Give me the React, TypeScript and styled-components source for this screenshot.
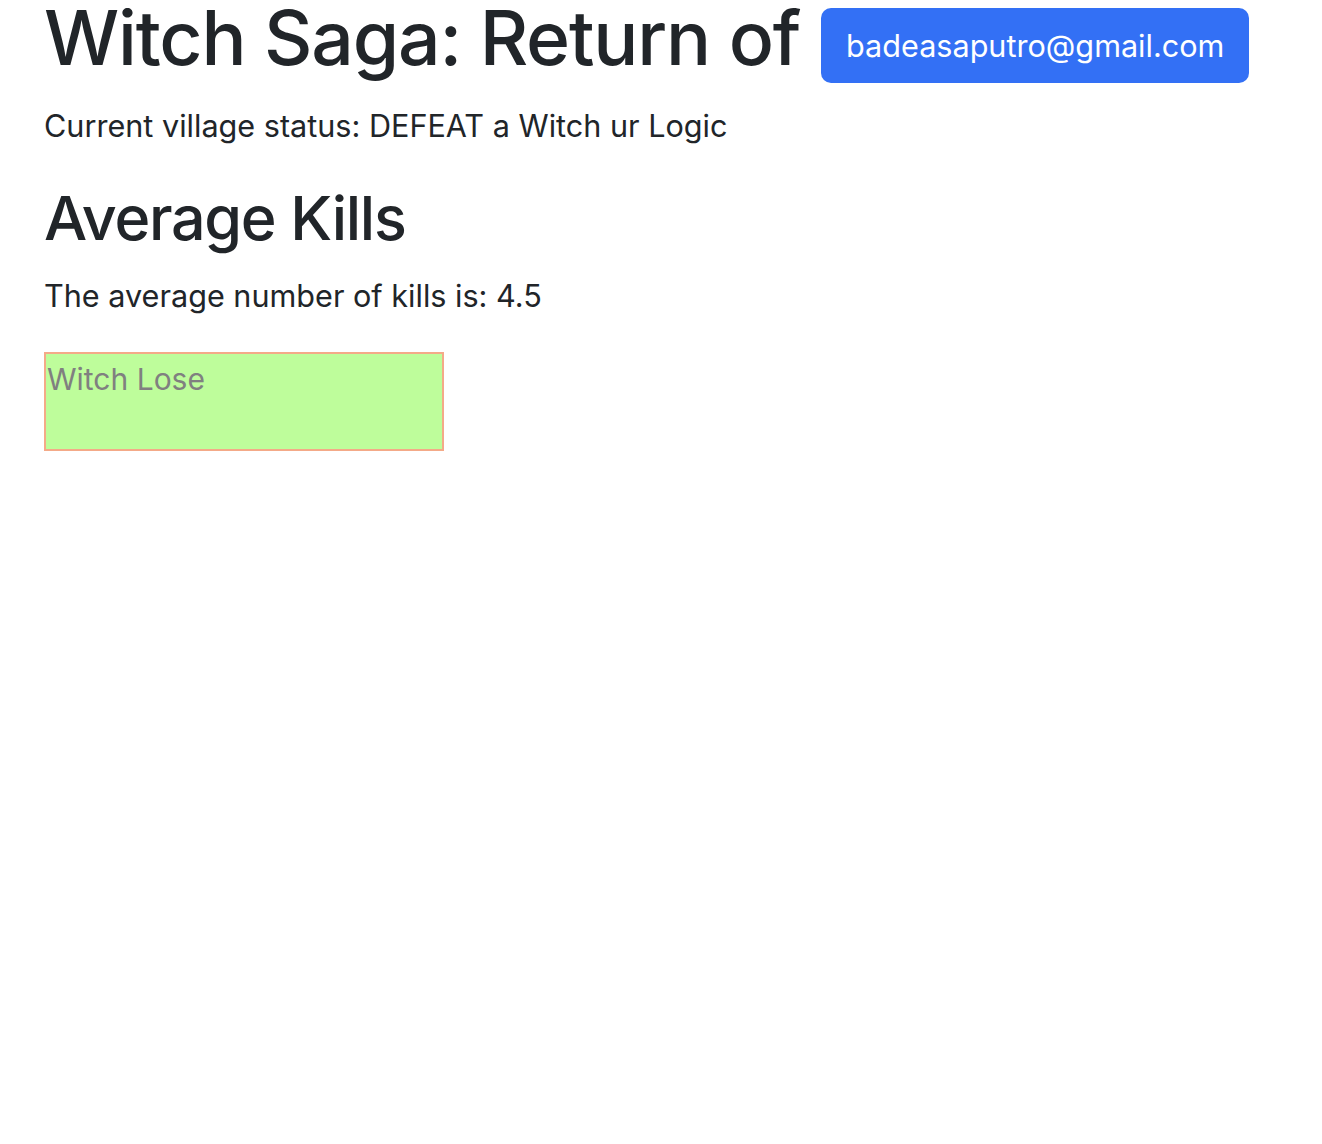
import styled, { createGlobalStyle } from 'styled-components'

const GlobalStyle = createGlobalStyle`
  body {
    margin: 0;
    background: #ffffff;
    color: #212529;
    font-family: Inter, "Noto Sans", sans-serif;
  }
`

const Page = styled.main`
  display: flex;
  flex-flow: column nowrap;
  align-items: flex-start;
  padding: 4px 44px 0;
`

const Header = styled.div`
  display: flex;
  align-items: flex-start;
  gap: 21px;
`

const Title = styled.h1`
  margin: 0;
  font-size: 75px;
  font-weight: 500;
  line-height: 0.9;
  letter-spacing: -1.2px;
`

const EmailButton = styled.button`
  margin-top: 4px;
  height: 75px;
  padding: 0 25px;
  border: none;
  border-radius: 10px;
  background: #3370f5;
  color: #ffffff;
  font-family: inherit;
  font-size: 30.6px;
  font-weight: 400;
  cursor: pointer;
`

const Text = styled.p<{ $gap?: number }>`
  margin: 0;
  margin-top: ${(p) => p.$gap ?? 20}px;
  font-size: 30.6px;
  line-height: 1.5;
`

const SectionTitle = styled.h2`
  margin: 33px 0 0;
  font-size: 61px;
  font-weight: 500;
  line-height: 1.2;
  letter-spacing: -1.3px;
`

const ResultBox = styled.div`
  box-sizing: border-box;
  width: 400px;
  height: 99px;
  margin-top: 33px;
  padding: 7px 1px;
  border: 2px solid #f4aa88;
  background: #befd9b;
  color: #808080;
  font-size: 30px;
  line-height: 1.21;
`

const App = () => {
  const averageKills = 4.5

  return (
    <>
      <GlobalStyle />
      <Page>
        <Header>
          <Title>Witch Saga: Return of</Title>
          <EmailButton>badeasaputro@gmail.com</EmailButton>
        </Header>
        <Text>Current village status: DEFEAT a Witch ur Logic</Text>
        <SectionTitle>Average Kills</SectionTitle>
        <Text $gap={18}>The average number of kills is: {averageKills}</Text>
        <ResultBox>Witch Lose</ResultBox>
      </Page>
    </>
  )
}

export default App
